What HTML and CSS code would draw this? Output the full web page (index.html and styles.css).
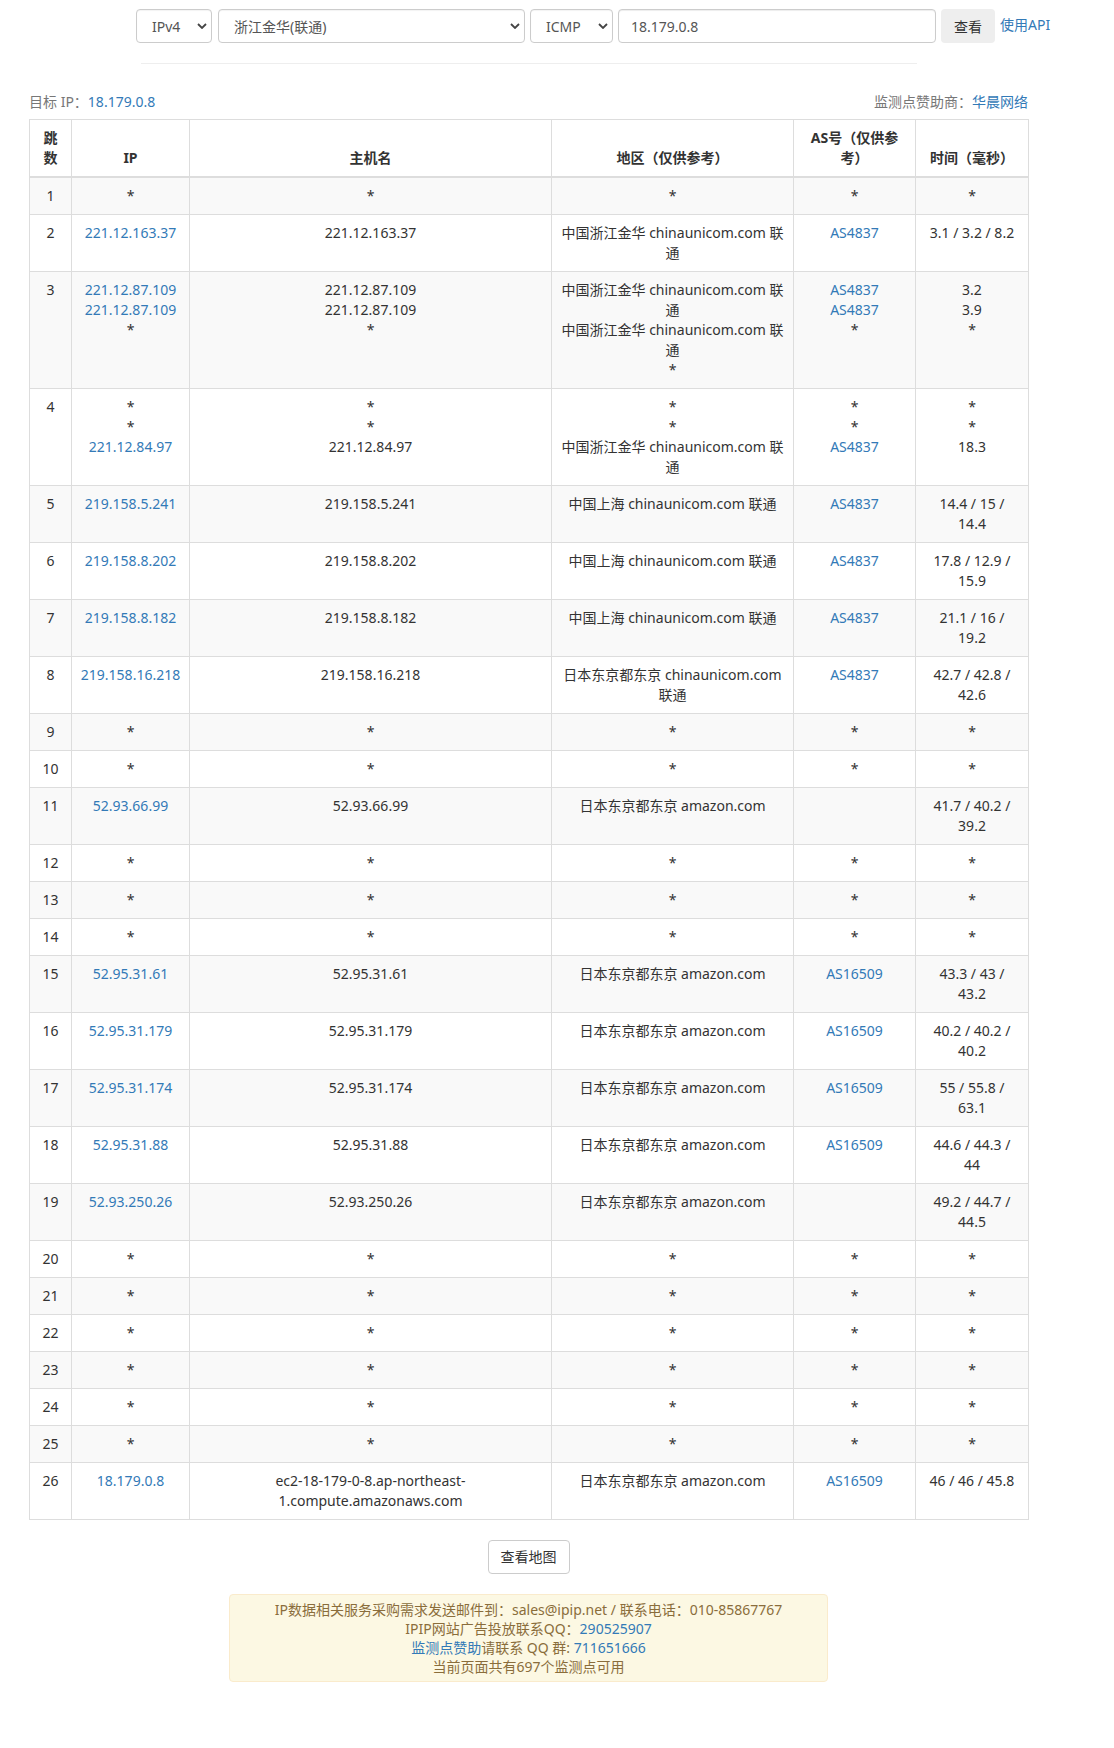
FILE: index.html
```html
<!DOCTYPE html>
<html lang="zh-CN">
<head>
<meta charset="utf-8">
<title>Traceroute</title>
<link rel="stylesheet" href="styles.css">
</head>
<body>
<form class="topbar">
  <div class="sel sel-ver">
    <select><option>IPv4</option></select>
    <svg class="chev" width="10" height="6" viewBox="0 0 10 6"><path d="M1 1l4 4 4-4" fill="none" stroke="#444" stroke-width="1.8"/></svg>
  </div>
  <div class="sel sel-node">
    <select><option>浙江金华(联通)</option></select>
    <svg class="chev" width="10" height="6" viewBox="0 0 10 6"><path d="M1 1l4 4 4-4" fill="none" stroke="#444" stroke-width="1.8"/></svg>
  </div>
  <div class="sel sel-proto">
    <select><option>ICMP</option></select>
    <svg class="chev" width="10" height="6" viewBox="0 0 10 6"><path d="M1 1l4 4 4-4" fill="none" stroke="#444" stroke-width="1.8"/></svg>
  </div>
  <input class="ipinput" type="text" value="18.179.0.8">
  <button class="btn-go" type="button">查看</button>
  <a class="api" href="#">使用API</a>
</form>
<hr class="sep">
<div class="main">
  <div class="info">
    <div><span class="muted">目标 IP：</span><a href="#">18.179.0.8</a></div>
    <div><span class="muted">监测点赞助商：</span><a href="#">华晨网络</a></div>
  </div>
  <table class="trace">
    <colgroup>
      <col class="c-hop"><col class="c-ip"><col class="c-host"><col class="c-area"><col class="c-as"><col class="c-time">
    </colgroup>
    <thead>
      <tr><th>跳数</th><th>IP</th><th>主机名</th><th>地区（仅供参考）</th><th>AS号（仅供参考）</th><th>时间（毫秒）</th></tr>
    </thead>
    <tbody>
      <tr><td>1</td><td>*</td><td>*</td><td>*</td><td>*</td><td>*</td></tr>
      <tr><td>2</td><td><a href="#">221.12.163.37</a></td><td>221.12.163.37</td><td>中国浙江金华 chinaunicom.com 联通</td><td><a href="#">AS4837</a></td><td>3.1 / 3.2 / 8.2</td></tr>
      <tr><td>3</td><td><a href="#">221.12.87.109</a><br><a href="#">221.12.87.109</a><br>*</td><td>221.12.87.109<br>221.12.87.109<br>*</td><td>中国浙江金华 chinaunicom.com 联通<br>中国浙江金华 chinaunicom.com 联通<br>*</td><td><a href="#">AS4837</a><br><a href="#">AS4837</a><br>*</td><td>3.2<br>3.9<br>*</td></tr>
      <tr><td>4</td><td>*<br>*<br><a href="#">221.12.84.97</a></td><td>*<br>*<br>221.12.84.97</td><td>*<br>*<br>中国浙江金华 chinaunicom.com 联通</td><td>*<br>*<br><a href="#">AS4837</a></td><td>*<br>*<br>18.3</td></tr>
      <tr><td>5</td><td><a href="#">219.158.5.241</a></td><td>219.158.5.241</td><td>中国上海 chinaunicom.com 联通</td><td><a href="#">AS4837</a></td><td>14.4 / 15 / 14.4</td></tr>
      <tr><td>6</td><td><a href="#">219.158.8.202</a></td><td>219.158.8.202</td><td>中国上海 chinaunicom.com 联通</td><td><a href="#">AS4837</a></td><td>17.8 / 12.9 / 15.9</td></tr>
      <tr><td>7</td><td><a href="#">219.158.8.182</a></td><td>219.158.8.182</td><td>中国上海 chinaunicom.com 联通</td><td><a href="#">AS4837</a></td><td>21.1 / 16 / 19.2</td></tr>
      <tr><td>8</td><td><a href="#">219.158.16.218</a></td><td>219.158.16.218</td><td>日本东京都东京 chinaunicom.com 联通</td><td><a href="#">AS4837</a></td><td>42.7 / 42.8 / 42.6</td></tr>
      <tr><td>9</td><td>*</td><td>*</td><td>*</td><td>*</td><td>*</td></tr>
      <tr><td>10</td><td>*</td><td>*</td><td>*</td><td>*</td><td>*</td></tr>
      <tr><td>11</td><td><a href="#">52.93.66.99</a></td><td>52.93.66.99</td><td>日本东京都东京 amazon.com</td><td></td><td>41.7 / 40.2 / 39.2</td></tr>
      <tr><td>12</td><td>*</td><td>*</td><td>*</td><td>*</td><td>*</td></tr>
      <tr><td>13</td><td>*</td><td>*</td><td>*</td><td>*</td><td>*</td></tr>
      <tr><td>14</td><td>*</td><td>*</td><td>*</td><td>*</td><td>*</td></tr>
      <tr><td>15</td><td><a href="#">52.95.31.61</a></td><td>52.95.31.61</td><td>日本东京都东京 amazon.com</td><td><a href="#">AS16509</a></td><td>43.3 / 43 / 43.2</td></tr>
      <tr><td>16</td><td><a href="#">52.95.31.179</a></td><td>52.95.31.179</td><td>日本东京都东京 amazon.com</td><td><a href="#">AS16509</a></td><td>40.2 / 40.2 / 40.2</td></tr>
      <tr><td>17</td><td><a href="#">52.95.31.174</a></td><td>52.95.31.174</td><td>日本东京都东京 amazon.com</td><td><a href="#">AS16509</a></td><td>55 / 55.8 / 63.1</td></tr>
      <tr><td>18</td><td><a href="#">52.95.31.88</a></td><td>52.95.31.88</td><td>日本东京都东京 amazon.com</td><td><a href="#">AS16509</a></td><td>44.6 / 44.3 / 44</td></tr>
      <tr><td>19</td><td><a href="#">52.93.250.26</a></td><td>52.93.250.26</td><td>日本东京都东京 amazon.com</td><td></td><td>49.2 / 44.7 / 44.5</td></tr>
      <tr><td>20</td><td>*</td><td>*</td><td>*</td><td>*</td><td>*</td></tr>
      <tr><td>21</td><td>*</td><td>*</td><td>*</td><td>*</td><td>*</td></tr>
      <tr><td>22</td><td>*</td><td>*</td><td>*</td><td>*</td><td>*</td></tr>
      <tr><td>23</td><td>*</td><td>*</td><td>*</td><td>*</td><td>*</td></tr>
      <tr><td>24</td><td>*</td><td>*</td><td>*</td><td>*</td><td>*</td></tr>
      <tr><td>25</td><td>*</td><td>*</td><td>*</td><td>*</td><td>*</td></tr>
      <tr><td>26</td><td><a href="#">18.179.0.8</a></td><td>ec2-18-179-0-8.ap-northeast-1.compute.amazonaws.com</td><td>日本东京都东京 amazon.com</td><td><a href="#">AS16509</a></td><td>46 / 46 / 45.8</td></tr>
    </tbody>
  </table>
  <div class="actions"><button class="btn-map" type="button">查看地图</button></div>
  <div class="notice">
    IP数据相关服务采购需求发送邮件到：sales@ipip.net / 联系电话：010-85867767<br>
    IPIP网站广告投放联系QQ：<a href="#">290525907</a><br>
    <a href="#">监测点赞助</a>请联系 QQ 群: <a href="#">711651666</a><br>
    当前页面共有697个监测点可用
  </div>
</div>
</body>
</html>
```
FILE: styles.css
```css
html, body {
  margin: 0;
  padding: 0;
  background: #fff;
}
body {
  font-family: "Noto Sans", "Noto Sans CJK SC", sans-serif;
  font-size: 14px;
  line-height: 20px;
  color: #333;
}
a {
  color: #337ab7;
  text-decoration: none;
}

/* top form */
.topbar {
  display: flex;
  align-items: center;
  gap: 5px;
  margin: 0;
  padding: 9px 0 0 136px;
}
.sel {
  position: relative;
  height: 34px;
  box-sizing: border-box;
}
.sel select {
  -webkit-appearance: none;
  appearance: none;
  width: 100%;
  height: 34px;
  box-sizing: border-box;
  border: 1px solid #ccc;
  border-radius: 4px;
  background: #fff;
  padding: 0 0 0 15px;
  font-family: "Noto Sans", "Noto Sans CJK SC", sans-serif;
  font-size: 14px;
  color: #555;
  box-shadow: inset 0 1px 1px rgba(0,0,0,.05);
}
.chev {
  position: absolute;
  right: 5px;
  top: 14px;
  pointer-events: none;
}
.sel-ver { width: 76px; margin-right: 1px; }
.sel-node { width: 307px; }
.sel-proto { width: 83px; }
.ipinput {
  width: 318px;
  height: 34px;
  box-sizing: border-box;
  border: 1px solid #ccc;
  border-radius: 4px;
  padding: 6px 12px;
  font-family: "Noto Sans", "Noto Sans CJK SC", sans-serif;
  font-size: 14px;
  color: #555;
  box-shadow: inset 0 1px 1px rgba(0,0,0,.075);
}
.btn-go {
  width: 54px;
  height: 34px;
  border: none;
  border-radius: 4px;
  background: #eee;
  color: #333;
  font-family: "Noto Sans", "Noto Sans CJK SC", sans-serif;
  font-size: 14px;
  padding: 0;
}
.api {
  align-self: flex-start;
  padding-top: 6px;
  font-size: 14px;
}

.sep {
  width: 776px;
  margin: 20px 0 0 141px;
  border: 0;
  border-top: 1px solid #eee;
  height: 0;
}

/* main area */
.main {
  width: 999px;
  margin-left: 29px;
}
.info {
  display: flex;
  justify-content: space-between;
  margin-top: 28px;
}
.muted {
  color: #777;
}

.trace {
  width: 999px;
  margin-top: 7px;
  table-layout: fixed;
  border-collapse: collapse;
  border: 1px solid #ddd;
}
.c-hop { width: 42px; }
.c-ip { width: 118px; }
.c-host { width: 362px; }
.c-area { width: 242px; }
.c-as { width: 122px; }
.c-time { width: 113px; }

.trace th,
.trace td {
  border: 1px solid #ddd;
  padding: 8px;
  text-align: center;
  line-height: 20px;
}
.trace th {
  vertical-align: bottom;
  border-bottom-width: 2px;
  font-weight: bold;
}
.trace td {
  vertical-align: top;
}
.trace tbody tr:nth-child(odd) {
  background: #f9f9f9;
}

.actions {
  display: flex;
  justify-content: center;
  margin-top: 20px;
}
.btn-map {
  height: 34px;
  padding: 6px 12px;
  border: 1px solid #ccc;
  border-radius: 4px;
  background: #fff;
  color: #333;
  font-family: "Noto Sans", "Noto Sans CJK SC", sans-serif;
  font-size: 14px;
  line-height: 20px;
}

.notice {
  width: 599px;
  box-sizing: border-box;
  margin: 20px auto 0;
  padding: 5px 15px;
  background: #fcf8e3;
  border: 1px solid #faebcc;
  border-radius: 4px;
  color: #8a6d3b;
  text-align: center;
  line-height: 19px;
}
```
